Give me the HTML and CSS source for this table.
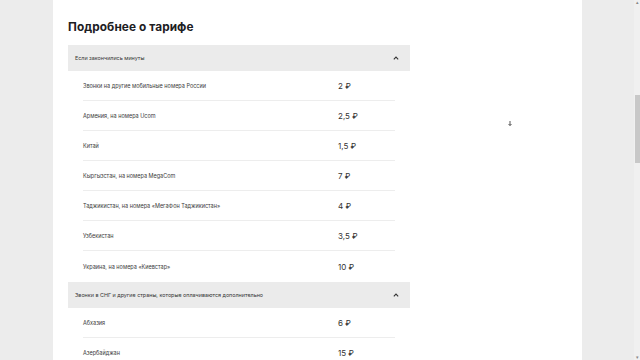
FILE: index.html
```html
<!DOCTYPE html>
<html lang="ru">
<head>
<meta charset="utf-8">
<link rel="stylesheet" href="styles.css">
</head>
<body>
<div class="page">
  <div class="side side-left"></div>
  <main class="main">
    <h2 class="title">Подробнее о тарифе</h2>
    <section class="acc">
      <div class="acc-head"><span>Если закончились минуты</span>
        <svg class="chev" width="6" height="4" viewBox="0 0 6 4"><path d="M0.8 3.3 L3 1 L5.2 3.3" fill="none" stroke="#333" stroke-width="1.1"/></svg>
      </div>
      <div class="rows">
        <div class="row"><span class="name">Звонки на другие мобильные номера России</span><span class="price">2 ₽</span></div>
        <div class="row"><span class="name">Армения, на номера Ucom</span><span class="price">2,5 ₽</span></div>
        <div class="row"><span class="name">Китай</span><span class="price">1,5 ₽</span></div>
        <div class="row"><span class="name">Кыргызстан, на номера MegaCom</span><span class="price">7 ₽</span></div>
        <div class="row"><span class="name">Таджикистан, на номера «МегаФон Таджикистан»</span><span class="price">4 ₽</span></div>
        <div class="row"><span class="name">Узбекистан</span><span class="price">3,5 ₽</span></div>
        <div class="row last"><span class="name">Украина, на номера «Киевстар»</span><span class="price">10 ₽</span></div>
      </div>
    </section>
    <section class="acc">
      <div class="acc-head"><span>Звонки в СНГ и другие страны, которые оплачиваются дополнительно</span>
        <svg class="chev" width="6" height="4" viewBox="0 0 6 4"><path d="M0.8 3.3 L3 1 L5.2 3.3" fill="none" stroke="#333" stroke-width="1.1"/></svg>
      </div>
      <div class="rows">
        <div class="row"><span class="name">Абхазия</span><span class="price">6 ₽</span></div>
        <div class="row"><span class="name">Азербайджан</span><span class="price">15 ₽</span></div>
      </div>
    </section>
    <svg class="cursor" width="4" height="5" viewBox="0 0 4 5"><path d="M2 0 V4.5 M0.5 3 L2 4.5 L3.5 3" fill="none" stroke="#444" stroke-width="0.9"/></svg>
  </main>
  <div class="side side-right"></div>
  <div class="scrollbar">
    <span class="arrow">▴</span>
    <div class="track"><div class="thumb"></div></div>
    <span class="arrow">▾</span>
  </div>
</div>
</body>
</html>
```
FILE: styles.css
```css
* { box-sizing: border-box; margin: 0; padding: 0; }
html, body { width: 640px; height: 360px; overflow: hidden; background: #fff; }
body { font-family: Inter, "Noto Sans", Roboto, sans-serif; color: #333; }
.page { display: flex; height: 360px; }
.side { background: #ececec; flex: none; }
.side-left { width: 53px; }
.side-right { width: 52px; }
.main { position: relative; width: 529px; flex: none; background: #fff; padding: 19px 0 0 15px; }
.title { font-size: 11.8px; font-weight: 700; color: #1d2023; line-height: 16px; height: 26px; letter-spacing: 0.1px; }
.acc { width: 342px; }
.acc-head { height: 26px; background: #ebebeb; display: flex; align-items: center; justify-content: space-between; padding: 0 11px 0 7px; font-size: 5.4px; color: #333; }
.chev { display: block; }
.rows { padding: 0 15px; }
.row { height: 30px; display: grid; grid-template-columns: 1fr 57px; align-items: center; border-bottom: 1px solid #ededed; }
.row.last { border-bottom: none; height: 31px; }
.name { font-size: 5.5px; color: #3a3a3a; }
.price { font-size: 8px; color: #333; }
.cursor { position: absolute; left: 455px; top: 121px; }
.scrollbar { width: 6px; flex: none; background: #f0f0f0; display: flex; flex-direction: column; align-items: center; }
.arrow { font-size: 5px; line-height: 5px; color: #888; height: 5px; }
.track { flex: 1; width: 100%; padding-top: 90px; }
.thumb { width: 5px; margin-left: 1px; height: 68px; background: #c8c8c8; }
```
